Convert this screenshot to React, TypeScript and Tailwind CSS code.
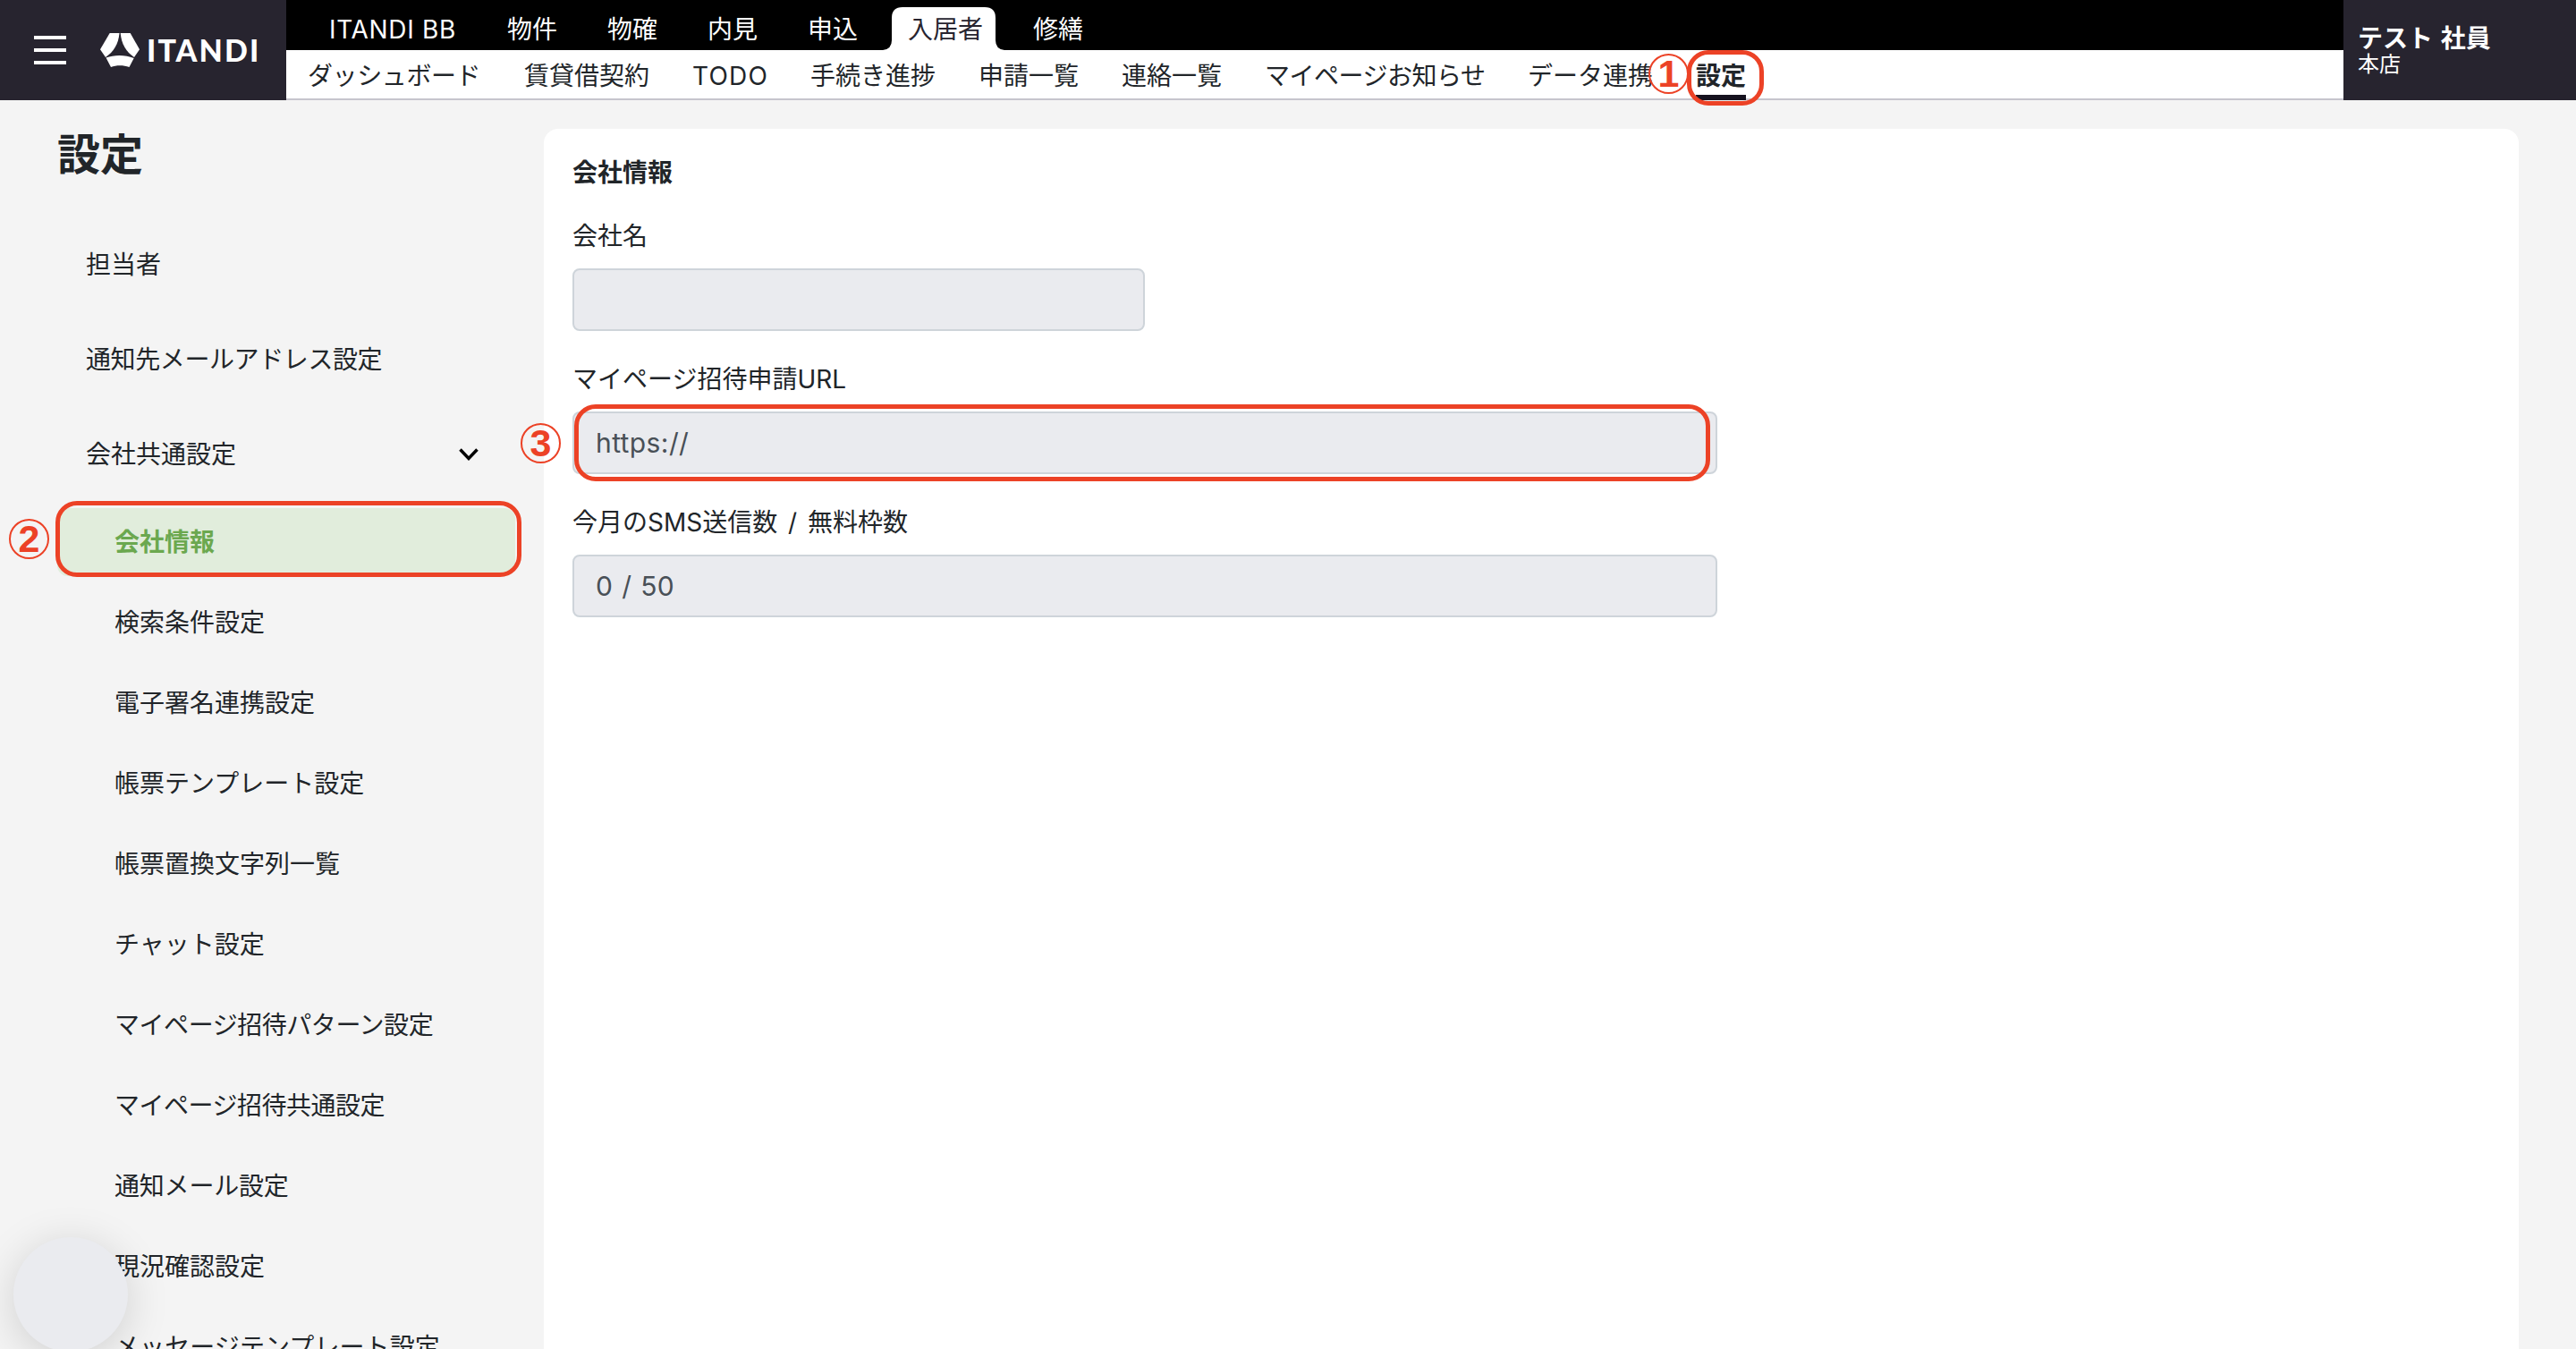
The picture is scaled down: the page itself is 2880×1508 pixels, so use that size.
import React from "react";
import clsx from "clsx";

interface NavItem {
  label: string;
  width: string;
  active?: boolean;
  tracking?: string;
}

const SERVICES: NavItem[] = [
  { label: "ITANDI BB", width: "w-[144px]", tracking: "tracking-[0.7px]" },
  { label: "物件", width: "w-[56px]" },
  { label: "物確", width: "w-[56px]" },
  { label: "内見", width: "w-[56px]" },
  { label: "申込", width: "w-[56px]" },
  { label: "入居者", width: "w-[84px]", active: true },
  { label: "修繕", width: "w-[56px]" },
];

const PAGES: NavItem[] = [
  { label: "ダッシュボード", width: "w-[194px]", tracking: "tracking-[-0.4px]" },
  { label: "賃貸借契約", width: "w-[140px]" },
  { label: "TODO", width: "w-[84px]", tracking: "tracking-[1.2px]" },
  { label: "手続き進捗", width: "w-[140px]" },
  { label: "申請一覧", width: "w-[112px]" },
  { label: "連絡一覧", width: "w-[112px]" },
  { label: "マイページお知らせ", width: "w-[246px]", tracking: "tracking-[-0.5px]" },
  { label: "データ連携", width: "w-[140px]" },
  { label: "設定", width: "w-[56px]", active: true },
];

const COMMON_SETTINGS = [
  { label: "会社情報" },
  { label: "検索条件設定" },
  { label: "電子署名連携設定" },
  { label: "帳票テンプレート設定" },
  { label: "帳票置換文字列一覧" },
  { label: "チャット設定" },
  { label: "マイページ招待パターン設定", tracking: "tracking-[-0.45px]" },
  { label: "マイページ招待共通設定", tracking: "tracking-[-0.5px]" },
  { label: "通知メール設定", tracking: "tracking-[-0.2px]" },
  { label: "現況確認設定" },
  { label: "メッセージテンプレート設定", tracking: "tracking-[0.1px]" },
];

const Logo: React.FC = () => (
  <div className="ml-[38px] flex items-center text-white">
    <svg width="44" height="38" viewBox="0 0 44 38" fill="currentColor">
      <path d="M10.7 0H21.5C20.5 12 15 21 6 27L0 18.3Z" />
      <path d="M22.7 0H33.7L44 18.3L38 27C29 21 23.7 12 22.7 0Z" />
      <path d="M6.5 27.5C16 24 28 24 37.7 28L32.5 38C26 35.8 18 35.8 12 38Z" />
    </svg>
    <span className="ml-2 font-[Lato] text-[34px] leading-none font-black tracking-[2.1px]">ITANDI</span>
  </div>
);

const Highlight: React.FC<{ className: string }> = ({ className }) => (
  <div className={clsx("absolute rounded-[24px] border-[5.5px] border-[#ec4226]", className)} />
);

const Step: React.FC<{ n: number; className: string }> = ({ n, className }) => (
  <span
    className={clsx(
      "absolute flex h-[45px] w-[45px] items-center justify-center rounded-full border-2 border-[#ec4226] font-['Liberation_Sans'] text-[43px] leading-none font-bold text-[#ec4226]",
      className
    )}>
    {n}
  </span>
);

interface FieldProps {
  label: string;
  value?: string;
  wide?: boolean;
}

const Field: React.FC<FieldProps> = ({ label, value = "", wide }) => (
  <div className="mb-8">
    <label className="block h-11 text-[28px] leading-[44px] [word-spacing:4px]">{label}</label>
    <input
      disabled
      value={value}
      className={clsx(
        "mt-[14px] block h-[70px] rounded-lg border-2 border-[#ced4da] bg-[#eaebef] px-6 text-[30px] tracking-[0.4px] text-[#495057] [word-spacing:1px]",
        wide ? "w-[1280px]" : "w-[640px]"
      )}
    />
  </div>
);

const App: React.FC = () => {
  return (
    <div className="relative h-[1508px] w-[2880px] overflow-hidden bg-[#f4f4f4] font-['Inter','Noto_Sans_CJK_JP',sans-serif] text-[28px] text-[#212529]">
      <header className="flex h-[112px]">
        <div className="flex w-[320px] items-center bg-[#27242f] pl-[38px]">
          <div className="flex w-9 flex-col gap-[10px]">
            <div className="h-1 bg-white" />
            <div className="h-1 bg-white" />
            <div className="h-1 bg-white" />
          </div>
          <Logo />
        </div>
        <div className="flex-1">
          <nav className="flex h-[56px] items-end gap-14 bg-black pl-[47px] text-white">
            {SERVICES.map((item) => (
              <div
                key={item.label}
                className={clsx(
                  "relative flex h-12 items-center justify-center whitespace-nowrap",
                  item.width,
                  item.tracking,
                  item.active && "text-[#27242f]"
                )}>
                {item.active && (
                  <svg className="absolute top-0 -left-7" width="140" height="48" viewBox="0 0 140 48" fill="#fff">
                    <path d="M0 48Q10 47 10 37V12Q10 0 22 0H114Q126 0 126 12V37Q126 47 136 48Z" />
                  </svg>
                )}
                <span className="relative pt-[2px]">{item.label}</span>
              </div>
            ))}
          </nav>
          <nav className="flex h-[56px] gap-12 border-b-2 border-[#c6c5cd] bg-white pl-6">
            {PAGES.map((item) => (
              <div
                key={item.label}
                className={clsx(
                  "relative h-[56px] leading-[58px] whitespace-nowrap",
                  item.width,
                  item.tracking,
                  item.active && "border-b-[6px] border-[#16121f] font-bold"
                )}>
                {item.label}
              </div>
            ))}
          </nav>
        </div>
        <div className="w-[260px] bg-[#27242f] pt-[25px] pl-4 text-white">
          <p className="text-[28px] leading-[36px] font-bold [word-spacing:2px]">テスト 社員</p>
          <p className="text-[24px] leading-[22px]">本店</p>
        </div>
      </header>

      <div className="flex">
        <aside className="w-[608px]">
          <h1 className="mt-[29px] ml-16 text-[48px] leading-[64px] font-bold">設定</h1>
          <ul className="mt-[38px]">
            <li className="h-[106px] pl-24 leading-[106px]">担当者</li>
            <li className="h-[106px] pl-24 leading-[106px] tracking-[-0.4px]">通知先メールアドレス設定</li>
            <li className="flex h-[106px] items-center justify-between pr-[73px] pl-24">
              会社共通設定
              <svg width="22" height="14" viewBox="0 0 22 14" fill="none" stroke="#000" strokeWidth="3.5">
                <path d="M1.5 1.5L11 11.5L20.5 1.5" />
              </svg>
            </li>
          </ul>
          <ul className="mt-[7px] ml-16 w-[512px]">
            {COMMON_SETTINGS.map((item, i) => (
              <li
                key={item.label}
                className={clsx(
                  "mb-[14px] h-[76px] pl-16 leading-[76px]",
                  item.tracking,
                  i === 0 && "rounded-xl bg-[#e1eddc] font-bold text-[#6ba84f]"
                )}>
                {item.label}
              </li>
            ))}
          </ul>
        </aside>
        <main className="mt-8 h-[1400px] w-[2208px] rounded-t-2xl bg-white px-8 pt-7">
          <h2 className="mb-7 leading-[42px] font-bold">会社情報</h2>
          <Field label="会社名" />
          <Field label="マイページ招待申請URL" value="https://" wide />
          <Field label="今月のSMS送信数 / 無料枠数" value="0 / 50" wide />
        </main>
      </div>

      <Step n={1} className="top-[60px] left-[1843px]" />
      <Highlight className="top-[56px] left-[1886px] h-[62px] w-[86px]" />
      <Step n={2} className="top-[580px] left-[10px]" />
      <Highlight className="top-[560px] left-[62px] h-[85px] w-[521px]" />
      <Step n={3} className="top-[473px] left-[582px]" />
      <Highlight className="top-[452px] left-[642px] h-[86px] w-[1270px]" />
      <div className="absolute bottom-[-3px] left-[15px] h-32 w-32 rounded-full bg-[#eaebef] shadow-[0_8px_48px_rgba(0,0,0,0.15)]" />
    </div>
  );
};

export default App;
